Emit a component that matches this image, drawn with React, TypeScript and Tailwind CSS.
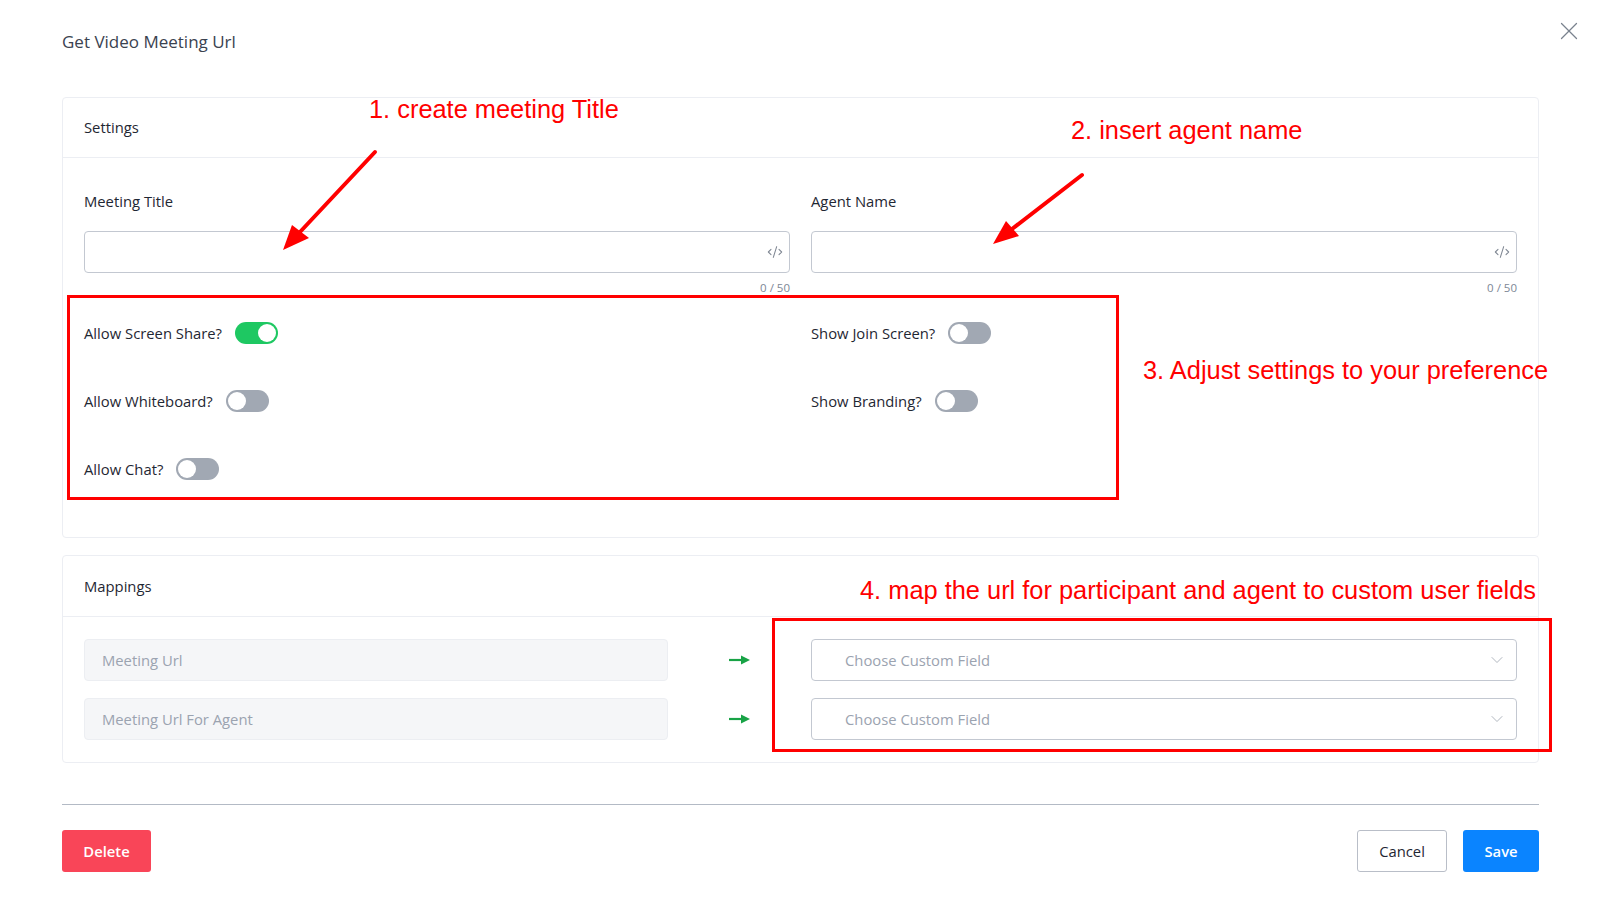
import React from "react";
import { X, CodeXml, ChevronDown } from "lucide-react";

function Toggle({ on }: { on?: boolean }) {
  return (
    <span
      className={
        "relative inline-flex h-[22px] w-[43px] shrink-0 rounded-full " +
        (on ? "bg-[#1ec862]" : "bg-[#a1a8b3]")
      }
    >
      <span
        className={
          "absolute top-[2px] h-[18px] w-[18px] rounded-full bg-white " +
          (on ? "right-[2px]" : "left-[2px]")
        }
      />
    </span>
  );
}

function TextField({ label }: { label: string }) {
  return (
    <div className="flex flex-col">
      <label className="text-[14.8px] leading-[20px] text-[#1f2733]">{label}</label>
      <div className="mt-[20px] flex h-[42px] items-center justify-end rounded-[4px] border border-[#c3c8d1] bg-white pr-[6px]">
        <CodeXml size={16} strokeWidth={1.6} className="text-[#808894]" />
      </div>
      <span className="mt-[8px] self-end text-[11.5px] leading-[14px] text-[#7d8796]">0 / 50</span>
    </div>
  );
}

function SwitchRow({ label, on }: { label: string; on?: boolean }) {
  return (
    <div className="flex h-[24px] items-center gap-[13px]">
      <span className="text-[14.8px] leading-[20px] text-[#1f2733]">{label}</span>
      <Toggle on={on} />
    </div>
  );
}

function GreenArrow() {
  return (
    <svg width="21" height="10" viewBox="0 0 21 10">
      <line x1="0" y1="5" x2="14" y2="5" stroke="#18a346" strokeWidth="2.2" />
      <polygon points="12,0.5 21,5 12,9.5" fill="#18a346" />
    </svg>
  );
}

function MappingRow({ name }: { name: string }) {
  return (
    <div className="grid grid-cols-2 gap-[21px]">
      <div className="flex items-center">
        <div className="flex h-[42px] w-[584px] items-center rounded-[4px] border border-[#eceef2] bg-[#f5f6f8] pl-[17px] text-[14.8px] text-[#9ba3b0]">
          {name}
        </div>
        <div className="ml-[61px] flex items-center">
          <GreenArrow />
        </div>
      </div>
      <div className="flex h-[42px] items-center justify-between rounded-[4px] border border-[#c3c8d1] bg-white pl-[33px] pr-[9px] text-[14.8px] text-[#9ba3b0]">
        <span>Choose Custom Field</span>
        <ChevronDown size={20} strokeWidth={1.1} className="text-[#a9afb9]" />
      </div>
    </div>
  );
}

export default function App() {
  return (
    <div
      className="relative h-[903px] w-full overflow-hidden bg-white"
      style={{ fontFamily: '"Open Sans", "Noto Sans", sans-serif' }}
    >
      <div className="pl-[62px] pr-[61px]">
        {/* Modal title */}
        <div className="h-[97px] pt-[30px]">
          <h1 className="text-[17px] leading-[24px] text-[#3a4250]">Get Video Meeting Url</h1>
        </div>

        {/* Settings card */}
        <section className="rounded-[4px] border border-[#eceef3]">
          <div className="flex h-[60px] items-center border-b border-[#eceef3] px-[21px] text-[14.8px] text-[#1f2733]">
            Settings
          </div>
          <div className="px-[21px] pb-[56px] pt-[33px]">
            <div className="grid grid-cols-2 gap-[21px]">
              <TextField label="Meeting Title" />
              <TextField label="Agent Name" />
            </div>
            <div className="mt-[26px] grid grid-cols-2 gap-[21px]">
              <div className="flex flex-col gap-[44px]">
                <SwitchRow label="Allow Screen Share?" on />
                <SwitchRow label="Allow Whiteboard?" />
                <SwitchRow label="Allow Chat?" />
              </div>
              <div className="flex flex-col gap-[44px]">
                <SwitchRow label="Show Join Screen?" />
                <SwitchRow label="Show Branding?" />
              </div>
            </div>
          </div>
        </section>

        {/* Mappings card */}
        <section className="mt-[17px] rounded-[4px] border border-[#eceef3]">
          <div className="flex h-[61px] items-center border-b border-[#eceef3] px-[21px] text-[14.8px] text-[#1f2733]">
            Mappings
          </div>
          <div className="flex flex-col gap-[17px] px-[21px] pb-[22px] pt-[22px]">
            <MappingRow name="Meeting Url" />
            <MappingRow name="Meeting Url For Agent" />
          </div>
        </section>

        {/* Footer */}
        <div className="mt-[41px] border-t border-[#b3bac5]" />
        <div className="mt-[25px] flex items-center justify-between">
          <button className="h-[42px] w-[89px] rounded-[3px] bg-[#f94558] text-[14.8px] font-semibold text-white">
            Delete
          </button>
          <div className="flex items-center gap-[16px]">
            <button className="h-[42px] w-[90px] rounded-[3px] border border-[#b9bec8] bg-white text-[14.8px] text-[#1f2733]">
              Cancel
            </button>
            <button className="h-[42px] w-[76px] rounded-[3px] bg-[#0a84ff] text-[14.8px] font-semibold text-white">
              Save
            </button>
          </div>
        </div>
      </div>

      {/* Close button */}
      <button className="absolute left-[1554px] top-[16px] text-[#7a828e]">
        <X size={30} strokeWidth={1} />
      </button>

      {/* Annotations */}
      <div
        className="pointer-events-none absolute inset-0 text-[25.4px] leading-[30px] text-[#ff0000]"
        style={{ fontFamily: '"Liberation Sans", Arial, sans-serif' }}
      >
        <span className="absolute left-[369px] top-[94px] whitespace-nowrap">1. create meeting Title</span>
        <span className="absolute left-[1071px] top-[115px] whitespace-nowrap">2. insert agent name</span>
        <span className="absolute left-[1143px] top-[355px] whitespace-nowrap">3. Adjust settings to your preference</span>
        <span className="absolute left-[860px] top-[575px] whitespace-nowrap">
          4. map the url for participant and agent to custom user fields
        </span>
        <div className="absolute left-[67px] top-[295px] h-[205px] w-[1052px] border-[3.5px] border-[#ff0000]" />
        <div className="absolute left-[772px] top-[618px] h-[134px] w-[780px] border-[3.5px] border-[#ff0000]" />
        <svg className="absolute left-0 top-0" width="1600" height="903" viewBox="0 0 1600 903">
          <line x1="375" y1="152" x2="300" y2="232" stroke="#ff0000" strokeWidth="4" strokeLinecap="round" />
          <polygon points="283,250 292,225 309,238" fill="#ff0000" />
          <line x1="1082" y1="175" x2="1012" y2="229" stroke="#ff0000" strokeWidth="4" strokeLinecap="round" />
          <polygon points="993,244 1006,221 1019,236" fill="#ff0000" />
        </svg>
      </div>
    </div>
  );
}
